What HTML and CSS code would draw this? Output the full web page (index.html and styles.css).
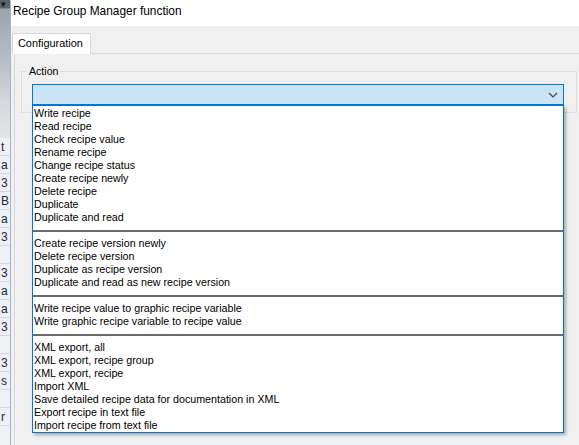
FILE: index.html
```html
<!DOCTYPE html>
<html>
<head>
<meta charset="utf-8">
<link rel="stylesheet" href="styles.css">
</head>
<body>
<div class="screen">
  <div class="bgstrip">
    <div class="bgtop"><span class="bgarrow">▾</span></div>
    <div class="bgcells">
      <span>t</span><span>a</span><span>3</span><span>B</span><span>a</span><span>3</span><span></span><span>3</span><span>a</span><span>a</span><span>3</span><span></span><span>3</span><span>s</span><span></span><span>r</span>
    </div>
  </div>
  <div class="dialog">
    <div class="titlebar">Recipe Group Manager function</div>
    <div class="client">
      <div class="tabs">
        <div class="tab">Configuration</div>
      </div>
      <div class="panel">
        <div class="group">
          <div class="group-label">Action</div>
          <div class="combo">
            <svg class="chev" width="10" height="6" viewBox="0 0 10 6"><path d="M1 1 L5 5 L9 1" fill="none" stroke="#444" stroke-width="1.2"/></svg>
          </div>
        </div>
      </div>
    </div>
  </div>
  <ul class="dropdown">
    <li>Write recipe</li>
    <li>Read recipe</li>
    <li>Check recipe value</li>
    <li>Rename recipe</li>
    <li>Change recipe status</li>
    <li>Create recipe newly</li>
    <li>Delete recipe</li>
    <li>Duplicate</li>
    <li>Duplicate and read</li>
    <li class="sep"></li>
    <li>Create recipe version newly</li>
    <li>Delete recipe version</li>
    <li>Duplicate as recipe version</li>
    <li>Duplicate and read as new recipe version</li>
    <li class="sep"></li>
    <li>Write recipe value to graphic recipe variable</li>
    <li>Write graphic recipe variable to recipe value</li>
    <li class="sep"></li>
    <li>XML export, all</li>
    <li>XML export, recipe group</li>
    <li>XML export, recipe</li>
    <li>Import XML</li>
    <li>Save detailed recipe data for documentation in XML</li>
    <li>Export recipe in text file</li>
    <li>Import recipe from text file</li>
  </ul>
</div>
</body>
</html>
```
FILE: styles.css
```css
html, body {
  margin: 0;
  padding: 0;
}
body {
  width: 579px;
  height: 445px;
  overflow: hidden;
  background: #f0f0f0;
  font-family: "Liberation Sans", Arial, sans-serif;
  color: #000;
}
.screen {
  position: relative;
  display: flex;
  width: 579px;
  height: 445px;
}
.bgstrip {
  width: 11px;
  flex: none;
  background: #d8d8d8;
  border-right: 1px solid #9fb8d4;
  box-sizing: border-box;
  overflow: hidden;
  display: flex;
  flex-direction: column;
}
.bgtop {
  height: 138px;
  flex: none;
  background: linear-gradient(#5d636b 0, #5d636b 8px, #9aa3ad 9px, #b8bec6 45%, #d6d9dd 75%, #e4e4e4);
  font-size: 9px;
  line-height: 9px;
  color: #111;
}
.bgarrow {
  display: block;
  padding-left: 1px;
}
.bgcells {
  display: flex;
  flex-direction: column;
  background: #eef1f4;
  flex: 1;
}
.bgcells span {
  height: 18px;
  line-height: 18px;
  font-size: 12px;
  padding-left: 1px;
  color: #1a2a3a;
  border-bottom: 1px solid #d4d8dc;
  box-sizing: border-box;
}
.dialog {
  flex: 1;
  display: flex;
  flex-direction: column;
  min-width: 0;
}
.titlebar {
  height: 26px;
  flex: none;
  background: #ffffff;
  font-size: 11.9px;
  line-height: 22px;
  padding-left: 2px;
  color: #000;
  white-space: nowrap;
}
.client {
  flex: 1;
  background: #f0f0f0;
  padding-top: 7px;
  padding-left: 1px;
}
.tabs {
  display: flex;
  height: 20px;
  position: relative;
  z-index: 1;
}
.tab {
  width: 79px;
  height: 21px;
  box-sizing: border-box;
  background: #ffffff;
  border: 1px solid #d9d9d9;
  border-bottom: none;
  font-size: 10.9px;
  line-height: 19px;
  padding-left: 5px;
}
.panel {
  margin-left: 2px;
  border-top: 1px solid #d9d9d9;
  border-left: 1px solid #d9d9d9;
  height: 400px;
  background: #f0f0f0;
  padding: 17px 0 0 6px;
  box-sizing: border-box;
}
.group {
  width: 556px;
  box-sizing: border-box;
  border: 1px solid #dcdcdc;
  padding: 0 12px 7px 10px;
}
.group-label {
  width: fit-content;
  margin: -7px 0 0 -5px;
  padding: 0 2px;
  background: #f0f0f0;
  font-size: 10.6px;
  line-height: 13px;
}
.combo {
  position: relative;
  margin-top: 6px;
  height: 21px;
  width: 532px;
  box-sizing: border-box;
  border: 1px solid #0078d7;
  background: #cce4f7;
}
.chev {
  position: absolute;
  right: 5px;
  top: 7px;
}
.dropdown {
  position: absolute;
  left: 32px;
  top: 105px;
  width: 532px;
  height: 328px;
  box-sizing: border-box;
  margin: 0;
  padding: 1px 0 0 1px;
  list-style: none;
  background: #ffffff;
  border: 1px solid #0078d7;
  box-shadow: 2px 2px 3px rgba(0, 0, 0, 0.3);
  font-size: 10.7px;
}
.dropdown li {
  height: 13px;
  line-height: 13px;
  white-space: nowrap;
  color: #000;
}
.dropdown li.sep {
  display: flex;
  align-items: center;
  margin-left: -1px;
}
.dropdown li.sep::before {
  content: "";
  flex: 1;
  height: 2px;
  background: #6a6a6a;
}
```
